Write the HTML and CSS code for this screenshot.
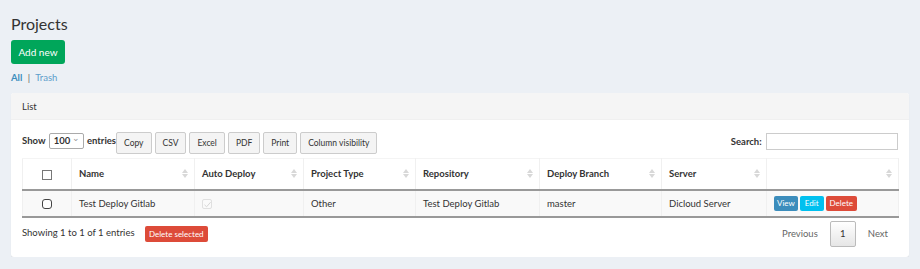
FILE: index.html
```html
<!DOCTYPE html>
<html>
<head>
<meta name="viewport" content="width=device-width, initial-scale=1">
<link rel="stylesheet" href="styles.css">
</head>
<body>

<h1 class="page-title">Projects</h1>
<a class="btn btn-add" href="#">Add new</a>
<div class="filters">
  <a class="active" href="#">All</a> <span class="sep">|</span> <a href="#">Trash</a>
</div>

<div class="box">
  <div class="box-header">List</div>
  <div class="box-body">

    <div class="dt-top">
      <div class="dt-left">
        <label class="length">Show
          <span class="select">100 <span class="caret">&#8964;</span></span>
          entries</label>
        <div class="dt-buttons">
          <button class="dt-btn">Copy</button>
          <button class="dt-btn">CSV</button>
          <button class="dt-btn">Excel</button>
          <button class="dt-btn">PDF</button>
          <button class="dt-btn">Print</button>
          <button class="dt-btn">Column visibility</button>
        </div>
      </div>
      <label class="search">Search: <input type="text"></label>
    </div>

    <table class="grid">
      <colgroup>
        <col style="width:49px">
        <col style="width:123px">
        <col style="width:109px">
        <col style="width:112px">
        <col style="width:124px">
        <col style="width:122px">
        <col style="width:105px">
        <col style="width:132px">
      </colgroup>
      <thead>
        <tr>
          <th class="center"><span class="box-check"></span></th>
          <th class="sort">Name</th>
          <th class="sort">Auto Deploy</th>
          <th class="sort">Project Type</th>
          <th class="sort">Repository</th>
          <th class="sort">Deploy Branch</th>
          <th class="sort">Server</th>
          <th class="sort"></th>
        </tr>
      </thead>
      <tbody>
        <tr>
          <td class="center"><span class="round-check"></span></td>
          <td>Test Deploy Gitlab</td>
          <td><span class="dis-check">
            <svg width="9" height="9" viewBox="0 0 9 9"><path d="M1.5 4.8 L3.6 6.8 L7.6 2.2" fill="none" stroke="#d6d6d6" stroke-width="1"/></svg>
          </span></td>
          <td>Other</td>
          <td>Test Deploy Gitlab</td>
          <td>master</td>
          <td>Dicloud Server</td>
          <td class="actions">
            <a class="xs view" href="#">View</a><a class="xs edit" href="#">Edit</a><a class="xs del" href="#">Delete</a>
          </td>
        </tr>
      </tbody>
    </table>

    <div class="dt-bottom">
      <div class="info">Showing 1 to 1 of 1 entries <a class="xs del wide" href="#">Delete selected</a></div>
      <div class="paging">
        <span class="pg">Previous</span>
        <span class="pg current">1</span>
        <span class="pg last">Next</span>
      </div>
    </div>

  </div>
</div>

</body>
</html>
```

FILE: styles.css
```css
* {box-sizing: border-box}

body, html {
  margin: 0;
  font-family: Lato, "Open Sans", sans-serif;
  font-size: 9.5px;
  color: #333;
  background-color: #ecf0f5;
}
body {
  padding: 0 11px;
}

a {
  text-decoration: none;
}

/* page header */
.page-title {
  margin: 0;
  padding-top: 11px;
  font-size: 16px;
  font-weight: normal;
  line-height: 25px;
  color: #333;
}

.btn-add {
  display: inline-block;
  margin-top: 4px;
  width: 54px;
  height: 24px;
  line-height: 24px;
  text-align: center;
  color: #fff;
  background-color: #00a65a;
  border-radius: 3px;
  font-size: 10px;
}

.filters {
  margin-top: 8px;
  line-height: 12px;
  color: #666;
}
.filters a {color: #5d9ecb;}
.filters a.active {font-weight: bold; color: #3c8dbc;}
.filters .sep {margin: 0 3px;}

/* list box */
.box {
  margin-top: 9px;
  width: 898px;
  background: #fff;
  border-radius: 3px;
  box-shadow: 0 1px 1px rgba(0,0,0,0.08);
  padding-bottom: 10px;
}
.box-header {
  height: 27px;
  line-height: 27px;
  padding-left: 11px;
  background: #f5f5f5;
  border-bottom: 1px solid #f0f0f0;
  border-radius: 3px 3px 0 0;
}
.box-body {
  padding: 12px 11px 0 11px;
}

.dt-top {
  display: flex;
  justify-content: space-between;
  align-items: flex-start;
  height: 26px;
}
.dt-left {
  display: flex;
  align-items: flex-start;
}
.length {
  font-weight: bold;
  line-height: 16px;
  margin-top: 1px;
}
.select {
  display: inline-block;
  width: 35px;
  height: 16px;
  margin: 0 1px;
  padding-left: 4px;
  border: 1px solid #aaa;
  border-radius: 2px;
  line-height: 14px;
  position: relative;
  vertical-align: top;
}
.caret {
  position: absolute;
  right: 3px;
  top: -3px;
  color: #999;
  font-weight: normal;
  font-size: 9px;
}
.dt-buttons {
  display: flex;
  gap: 3px;
  margin-left: 0;
}
.dt-btn {
  height: 22px;
  padding: 0 7px;
  font-family: inherit;
  font-size: 8.5px;
  color: #333;
  background: #f4f4f4;
  border: 1px solid #ccc;
  border-radius: 2px;
}
.search {
  font-weight: bold;
  line-height: 17px;
  margin-top: 1px;
}
.search input {
  width: 132px;
  height: 17px;
  margin: 0 0 0 2px;
  border: 1px solid #ccc;
  vertical-align: top;
}

/* table */
.grid {
  width: 876px;
  margin-top: 0;
  border-collapse: collapse;
  table-layout: fixed;
}
.grid th, .grid td {
  border: 1px solid #f0f0f0;
  text-align: left;
  white-space: nowrap;
}
.grid th {
  height: 31px;
  padding: 0 7px;
  font-weight: bold;
  border-bottom: 2px solid #999;
  border-top: 1px solid #f4f4f4;
}
.grid td {
  height: 27px;
  padding: 0 7px;
  background: #f9f9f9;
  border-bottom: 2px solid #999;
}
.grid .center {text-align: center;}

/* sort arrows */
.sort {
  position: relative;
}
.sort::before, .sort::after {
  content: "";
  position: absolute;
  right: 6px;
  width: 0;
  height: 0;
  border-left: 3px solid transparent;
  border-right: 3px solid transparent;
}
.sort::before {
  top: 10px;
  border-bottom: 4px solid #d8d8d8;
}
.sort::after {
  top: 15px;
  border-top: 4px solid #d8d8d8;
}

.box-check {
  display: inline-block;
  width: 10px;
  height: 10px;
  border: 1px solid #777;
  background: #fff;
  vertical-align: middle;
}
.round-check {
  display: inline-block;
  width: 10px;
  height: 10px;
  border: 1px solid #444;
  border-radius: 3px;
  background: #fff;
  vertical-align: middle;
}
.dis-check {
  display: inline-block;
  width: 10px;
  height: 10px;
  border: 1px solid #e0e0e0;
  border-radius: 2px;
  background: #fafafa;
  vertical-align: middle;
  line-height: 0;
}

.actions {font-size: 0;}
.xs {
  display: inline-block;
  height: 15px;
  line-height: 15px;
  padding: 0 4px;
  margin-right: 2px;
  border-radius: 2px;
  color: #fff;
  font-size: 8px;
  vertical-align: middle;
}
.xs.view {background: #3c8dbc; padding: 0 3px;}
.xs.edit {background: #00c0ef; padding: 0 5px;}
.xs.del {background: #dd4b39;}
.xs.wide {
  height: 16px;
  line-height: 16px;
  padding: 0 4px;
  margin-left: 8px;
}

.dt-bottom {
  display: flex;
  justify-content: space-between;
  align-items: flex-start;
  margin-top: 3px;
}
.info {
  margin-top: 5px;
}
.paging {
  display: flex;
  align-items: center;
  margin-right: 10px;
}
.pg {
  color: #666;
  padding: 0 12px;
}
.pg.last {padding-right: 0;}
.pg.current {
  width: 26px;
  height: 26px;
  line-height: 24px;
  padding: 0;
  text-align: center;
  color: #333;
  border: 1px solid #bbb;
  border-radius: 2px;
  background: linear-gradient(#fff, #e6e6e6);
}
```
